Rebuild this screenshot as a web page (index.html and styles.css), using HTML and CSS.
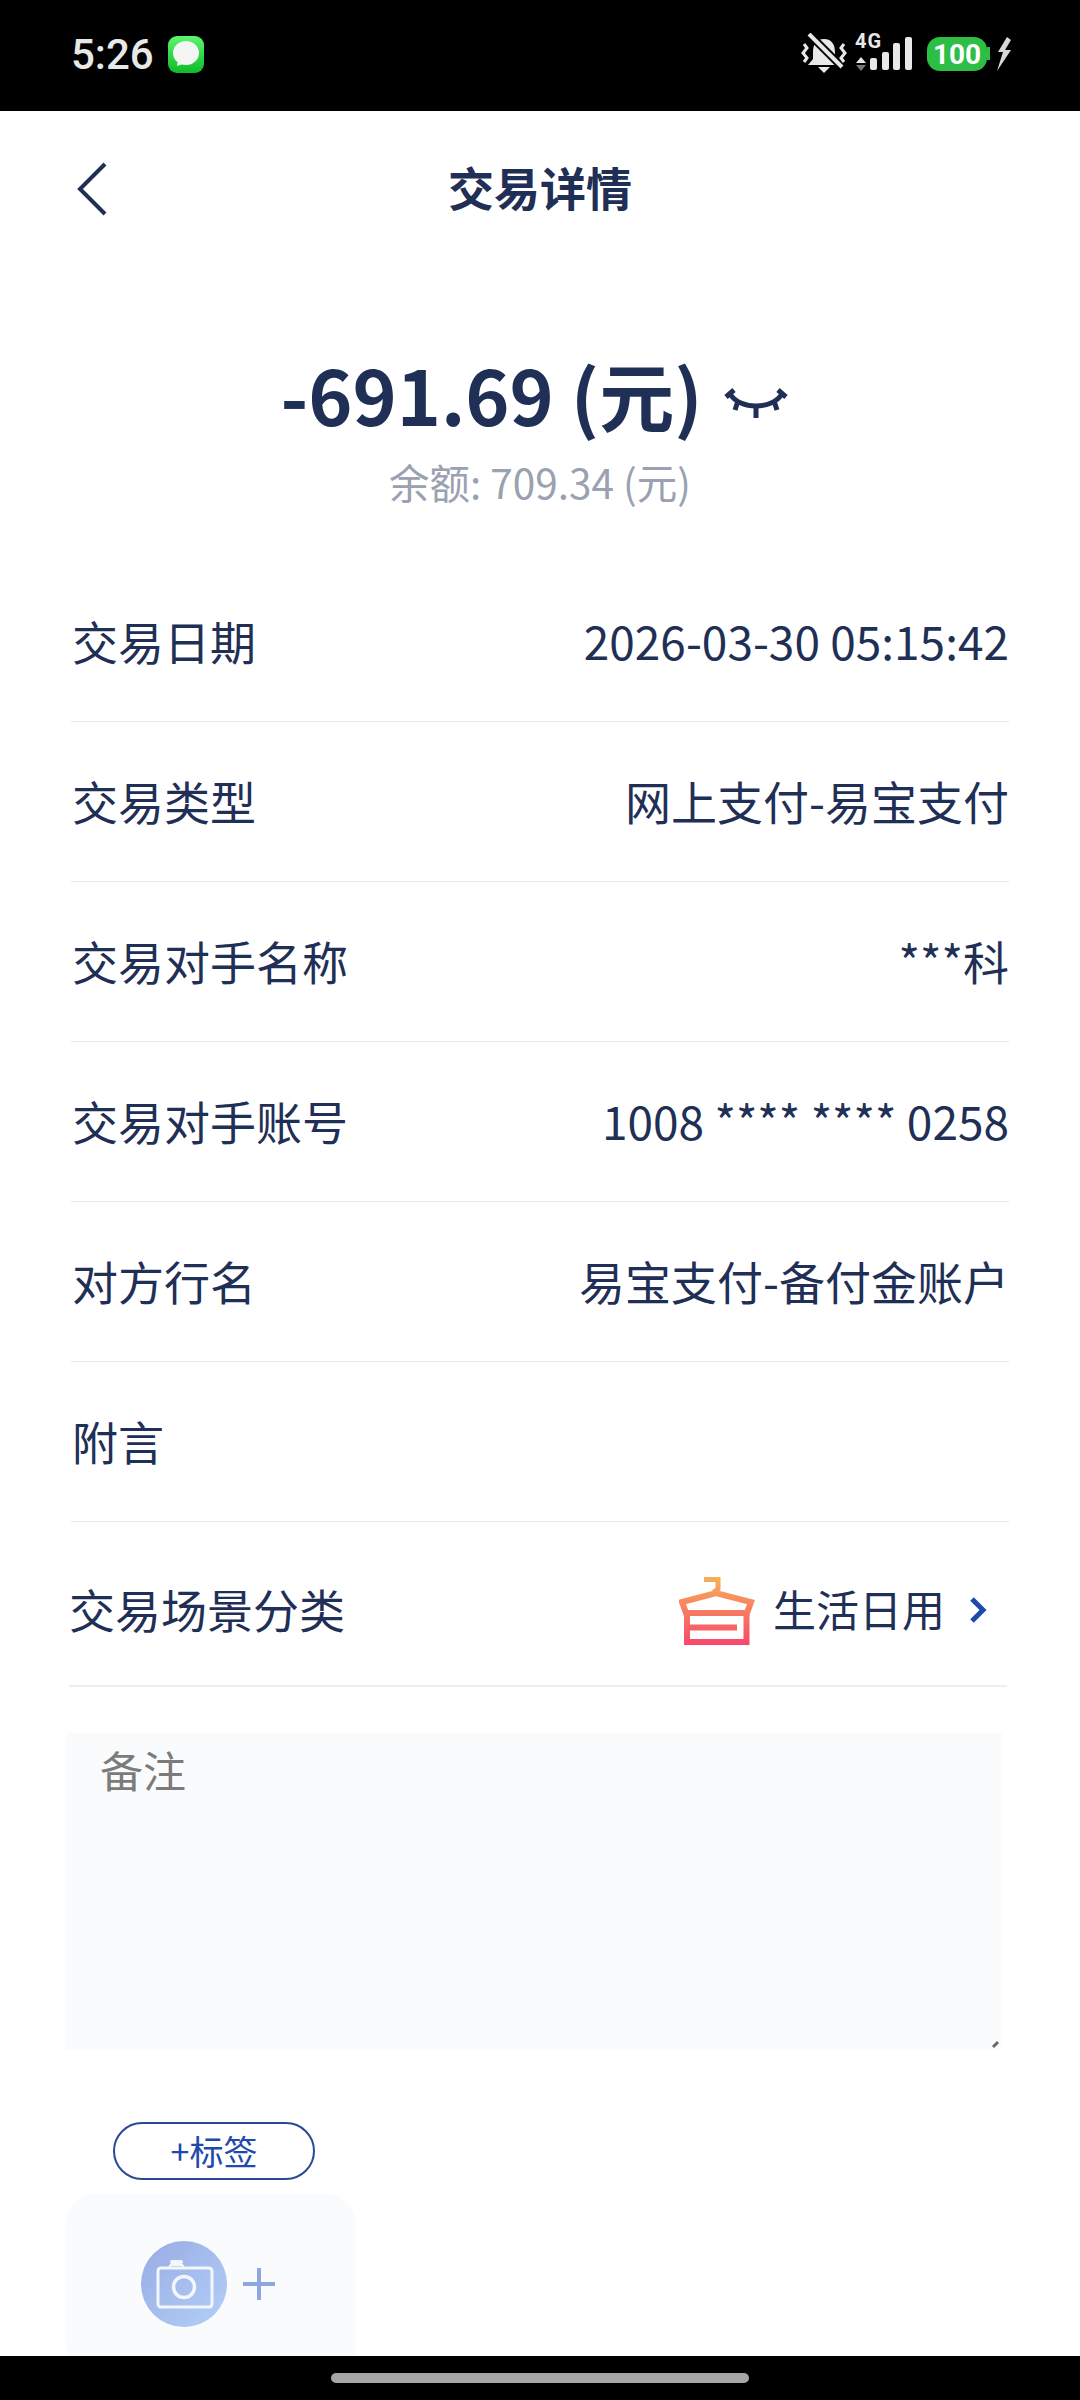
FILE: index.html
```html
<!DOCTYPE html>
<html>
<head>
    <meta charset="UTF-8">
    <title>交易详情</title>
    <link rel="stylesheet" href="styles.css">
</head>

<body>
    <div class="page">

        <!-- 상태바 -->
        <div class="statusBar">
            <div class="statusLeft">
                <span class="clock">5:26</span>
                <svg class="msgIcon" width="36" height="37" viewBox="0 0 36 37">
                    <defs>
                        <linearGradient id="msgBg" x1="0" y1="0" x2="0" y2="1">
                            <stop offset="0" stop-color="#5df56f"/>
                            <stop offset="1" stop-color="#0dbb2a"/>
                        </linearGradient>
                    </defs>
                    <rect width="36" height="37" rx="9" fill="url(#msgBg)"/>
                    <ellipse cx="18" cy="17" rx="13" ry="12" fill="#f4f6f4"/>
                    <path d="M10 24 L9 30 L17 27 Z" fill="#f4f6f4"/>
                </svg>
            </div>
            <div class="statusRight">
                <svg class="bellIcon" width="46" height="42" viewBox="0 0 46 42">
                    <path d="M23 6 C15 6 12 12 12 19 L12 26 L7 32 L39 32 L34 26 L34 19 C34 12 31 6 23 6 Z" fill="#e8e8e8"/>
                    <path d="M17 34 L29 34 L23 40 Z" fill="#e8e8e8"/>
                    <path d="M8 1 L41 34" stroke="#000" stroke-width="8"/>
                    <path d="M8 1 L41 34" stroke="#e8e8e8" stroke-width="4"/>
                    <path d="M3 11 L6 15 L2 20 L6 25 L3 29" stroke="#e8e8e8" stroke-width="3" fill="none"/>
                    <path d="M43 11 L40 15 L44 20 L40 25 L43 29" stroke="#e8e8e8" stroke-width="3" fill="none"/>
                </svg>
                <div class="signal">
                    <span class="netLabel">4G</span>
                    <svg class="signalBars" width="58" height="36" viewBox="0 0 58 36">
                        <path d="M1 26 L11 26 L6 20 Z" fill="#e8e8e8"/>
                        <path d="M1 28 L11 28 L6 34 Z" fill="#777"/>
                        <rect x="15" y="21" width="7" height="12" rx="2" fill="#e8e8e8"/>
                        <rect x="27" y="15" width="7" height="18" rx="2" fill="#e8e8e8"/>
                        <rect x="38" y="6" width="7" height="27" rx="2" fill="#e8e8e8"/>
                        <rect x="50" y="0" width="7" height="33" rx="2" fill="#e8e8e8"/>
                    </svg>
                </div>
                <div class="battery"><span>100</span></div>
                <svg class="boltIcon" width="16" height="34" viewBox="0 0 16 34">
                    <path d="M11 0 L2 15 L7 15 L1 34 L15 13 L9 13 L15 3 Z" fill="#d8d8d8"/>
                </svg>
            </div>
        </div>

        <div class="content">
            <div class="topNav">
                <svg class="backIcon" width="32" height="54" viewBox="0 0 32 54">
                    <path d="M29 2 L4 27 L29 52" fill="none" stroke="#1f2f55" stroke-width="4"/>
                </svg>
                <h1 class="navTitle">交易详情</h1>
            </div>

            <div class="summary">
                <div class="amountLine">
                    <span class="amount">-691.69 (元)</span>
                    <svg class="eyeIcon" width="64" height="32" viewBox="0 0 64 32">
                        <path d="M6 8 C16 24 48 24 58 8" fill="none" stroke="#1f2f55" stroke-width="5"/>
                        <path d="M2 11 L10 4 M14 15 L11 24 M32 20 L32 32 M50 15 L53 24 M62 11 L54 4" stroke="#1f2f55" stroke-width="5" fill="none"/>
                    </svg>
                </div>
                <div class="balance">余额: 709.34 (元)</div>
            </div>

            <ul class="infoList">
                <li class="infoRow"><span class="rowLabel">交易日期</span><span>2026-03-30 05:15:42</span></li>
                <li class="infoRow"><span class="rowLabel">交易类型</span><span>网上支付-易宝支付</span></li>
                <li class="infoRow"><span class="rowLabel">交易对手名称</span><span>***科</span></li>
                <li class="infoRow"><span class="rowLabel">交易对手账号</span><span>1008 **** **** 0258</span></li>
                <li class="infoRow"><span class="rowLabel">对方行名</span><span>易宝支付-备付金账户</span></li>
                <li class="infoRow"><span class="rowLabel">附言</span></li>
            </ul>

            <div class="sceneRow">
                <span>交易场景分类</span>
                <div class="sceneValue">
                    <svg class="hangerIcon" width="76" height="68" viewBox="0 0 76 68">
                        <defs>
                            <linearGradient id="hangerBg" gradientUnits="userSpaceOnUse" x1="0" y1="0" x2="0" y2="68">
                                <stop offset="0" stop-color="#f6b155"/>
                                <stop offset="1" stop-color="#f8476e"/>
                            </linearGradient>
                        </defs>
                        <path d="M25 2.5 L39 2.5 L39 12 L36 14 L36 17" fill="none" stroke="url(#hangerBg)" stroke-width="5"/>
                        <path d="M3 25 L37 16 L72 25 L68 36 L7 36 Z" fill="none" stroke="url(#hangerBg)" stroke-width="6"/>
                        <path d="M8 36 L8 65 L67.5 65 L67.5 36 M8 50.5 L58 50.5" fill="none" stroke="url(#hangerBg)" stroke-width="6"/>
                    </svg>
                    <span class="sceneName">生活日用</span>
                    <svg class="chevron" width="18" height="26" viewBox="0 0 18 26">
                        <path d="M3 2 L14 13 L3 24" fill="none" stroke="#2049ae" stroke-width="5"/>
                    </svg>
                </div>
            </div>

            <div class="noteBox">
                <span class="notePlaceholder">备注</span>
                <span class="resizeGrip"></span>
            </div>

            <div class="tagBtn">+标签</div>

            <div class="photoCard">
                <svg class="cameraIcon" width="86" height="86" viewBox="0 0 86 86">
                    <defs>
                        <linearGradient id="camBg" x1="0" y1="0" x2="1" y2="1">
                            <stop offset="0" stop-color="#98abe3"/>
                            <stop offset="1" stop-color="#b3d0f8"/>
                        </linearGradient>
                    </defs>
                    <circle cx="43" cy="43" r="43" fill="url(#camBg)"/>
                    <rect x="17" y="27" width="54" height="39" rx="3" fill="none" stroke="#f2f6fd" stroke-width="3"/>
                    <rect x="29" y="19" width="13" height="4" rx="2" fill="#f2f6fd"/>
                    <path d="M28 26 L30 24 L41 24 L43 26" fill="none" stroke="#f2f6fd" stroke-width="2"/>
                    <circle cx="43" cy="46" r="10.5" fill="none" stroke="#f2f6fd" stroke-width="3.5"/>
                </svg>
                <svg class="plusIcon" width="34" height="34" viewBox="0 0 34 34">
                    <path d="M1 17 L33 17 M17 1 L17 33" fill="none" stroke="#8fa6e0" stroke-width="4"/>
                </svg>
            </div>
        </div>

        <div class="navBar"><span class="homeBar"></span></div>
    </div>
</body>
</html>
```

FILE: styles.css
```css
/* 전체 설정 */
* {
    margin: 0;
    padding: 0;
    box-sizing: border-box;
    list-style-type: none;
}

body {
    width: 1080px;
    height: 2400px;
    overflow: hidden;
    background-color: #fff;
    color: #1f2f55;
    font-family: "Noto Sans CJK SC", "Noto Sans", sans-serif;
}

.page {
    display: flex;
    flex-direction: column;
    height: 2400px;
}

/* 상태바 */
.statusBar {
    display: flex;
    flex: none;
    justify-content: space-between;
    align-items: center;
    height: 111px;
    padding: 0 68px 3px 71px;
    background-color: #000;
}

.statusLeft,
.statusRight {
    display: flex;
    align-items: center;
}

.clock {
    color: #e8e8e8;
    font-family: "Roboto", sans-serif;
    font-size: 42px;
    font-weight: 500;
}

.msgIcon {
    margin-left: 14px;
}

.signal {
    position: relative;
    width: 58px;
    height: 40px;
    margin-left: 8px;
}

.netLabel {
    position: absolute;
    top: -5px;
    left: 0;
    color: #e8e8e8;
    font-family: "Roboto", sans-serif;
    font-size: 20px;
    font-weight: 700;
    letter-spacing: 1px;
}

.signalBars {
    display: block;
    margin-top: 3px;
}

.battery {
    display: flex;
    justify-content: center;
    align-items: center;
    position: relative;
    width: 60px;
    height: 34px;
    margin-left: 14px;
    border-radius: 13px;
    background-color: #2dbe46;
    color: #fff;
    font-family: "Roboto", sans-serif;
    font-size: 28px;
    font-weight: 700;
}

.battery::after {
    content: "";
    position: absolute;
    top: 10px;
    right: -3px;
    width: 3px;
    height: 13px;
    background-color: #2dbe46;
}

.boltIcon {
    margin-left: 9px;
}

/* 본문 */
.content {
    flex: 1;
    overflow: hidden;
}

.topNav {
    position: relative;
    height: 160px;
    padding-bottom: 11px;
    display: flex;
    justify-content: center;
    align-items: center;
}

.backIcon {
    position: absolute;
    left: 76px;
    top: 51px;
}

.navTitle {
    font-size: 46px;
    font-weight: 700;
    line-height: 60px;
}

.summary {
    padding-top: 71px;
    text-align: center;
}

.amountLine {
    display: flex;
    justify-content: center;
    align-items: center;
    height: 104px;
    padding-right: 12px;
}

.amount {
    font-size: 75px;
    font-weight: 700;
    line-height: 104px;
}

.eyeIcon {
    margin-left: 21px;
    margin-top: 16px;
}

.balance {
    margin-top: 8px;
    color: #9aa1b0;
    font-size: 40.5px;
    line-height: 56px;
}

/* 정보 목록 */
.infoList {
    margin: 52px 71px 0 71px;
}

.infoRow {
    display: flex;
    justify-content: space-between;
    align-items: center;
    height: 160px;
    padding-bottom: 3px;
    font-size: 46px;
    border-bottom: 1px solid #e9e9ea;
}

.rowLabel {
    margin-left: 1px;
}

.sceneRow {
    display: flex;
    justify-content: space-between;
    align-items: center;
    height: 165px;
    padding-top: 8px;
    margin: 0 73px 0 69px;
    font-size: 46px;
    border-bottom: 2px solid #eeeeef;
}

.sceneValue {
    display: flex;
    align-items: center;
}

.hangerIcon {
    margin-top: 6px;
}

.sceneName {
    margin-left: 18px;
    font-size: 43px;
}

.chevron {
    margin-left: 24px;
    margin-right: 20px;
    margin-top: 4px;
}

/* 비고 */
.noteBox {
    position: relative;
    width: 936px;
    height: 317px;
    margin: 46px 0 0 66px;
    padding: 6px 34px;
    background-color: #fafbfd;
}

.notePlaceholder {
    color: #7b7b7b;
    font-size: 43px;
    line-height: 60px;
}

.resizeGrip {
    position: absolute;
    right: 3px;
    bottom: 4px;
    width: 7px;
    height: 3px;
    transform: rotate(-45deg);
    background-color: #666;
}

.tagBtn {
    width: 202px;
    height: 58px;
    margin: 72px 0 0 113px;
    border: 2px solid #2a4a96;
    border-radius: 29px;
    color: #2049ae;
    font-size: 34px;
    line-height: 54px;
    text-align: center;
}

.photoCard {
    display: flex;
    align-items: center;
    width: 290px;
    height: 180px;
    margin: 14px 0 0 66px;
    padding: 0 0 0 75px;
    border-radius: 30px;
    background-color: #fafbfd;
}

.plusIcon {
    margin-left: 15px;
}

/* 하단 내비게이션 */
.navBar {
    display: flex;
    flex: none;
    justify-content: center;
    align-items: center;
    height: 44px;
    background-color: #000;
}

.homeBar {
    width: 418px;
    height: 10px;
    border-radius: 5px;
    background-color: #a6a6a6;
}
```
